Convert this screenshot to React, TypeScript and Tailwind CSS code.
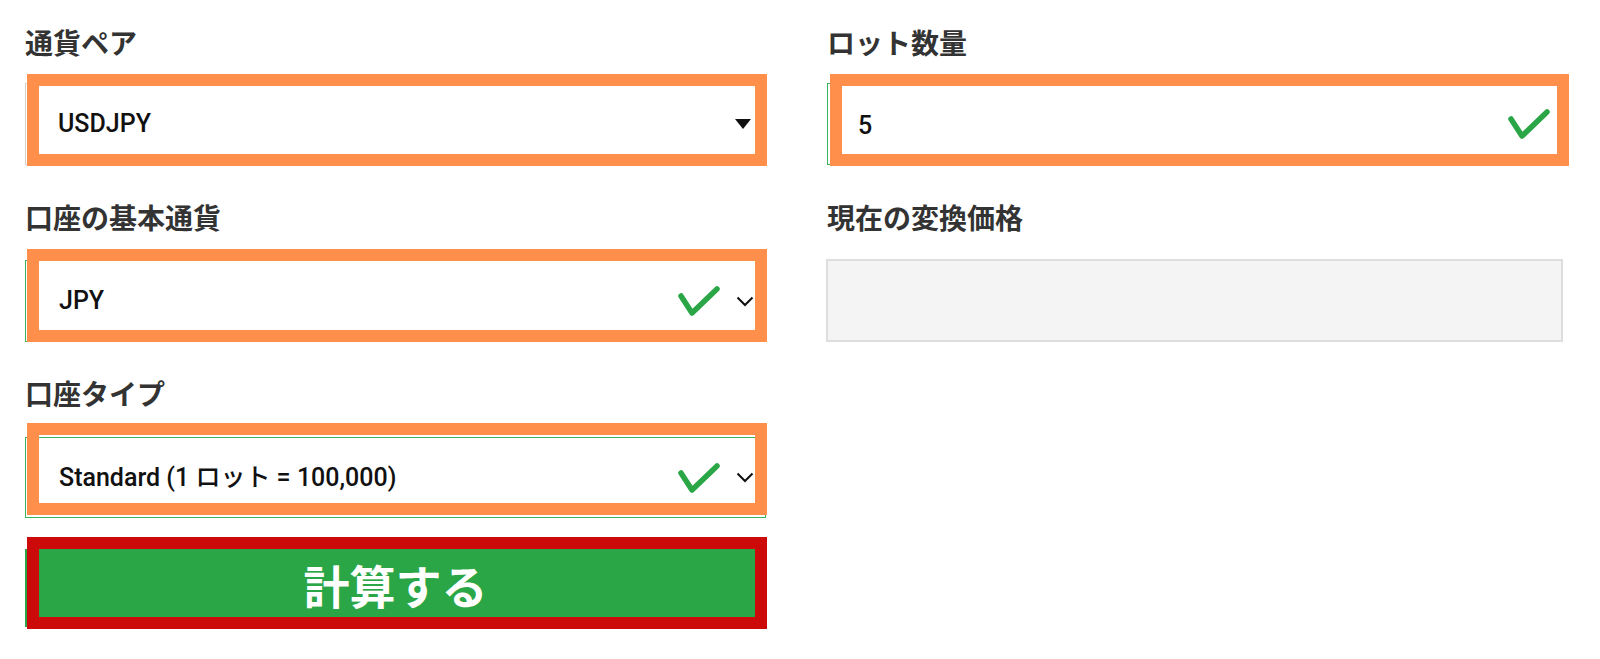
import React from "react";

const labelCls =
  "h-[40px] leading-[40px] text-[28px] font-bold text-[#333] [font-family:'Noto_Sans_CJK_JP',sans-serif]";
const valueCls =
  "text-[25px] font-medium text-[#111] [font-family:Roboto,'Noto_Sans_CJK_JP',sans-serif]";

function Check() {
  return (
    <svg width="42" height="30" viewBox="0 0 42 30" className="shrink-0">
      <polyline
        points="3,10 14,27 39,3"
        fill="none"
        stroke="#2aa646"
        strokeWidth="5.5"
        strokeLinecap="round"
        strokeLinejoin="round"
      />
    </svg>
  );
}

function Chevron() {
  return (
    <svg width="18" height="11" viewBox="0 0 18 11" className="shrink-0">
      <polyline points="1.5,1.5 9,9 16.5,1.5" fill="none" stroke="#111" strokeWidth="2" />
    </svg>
  );
}

function Caret() {
  return (
    <svg width="16" height="10" viewBox="0 0 16 10" className="shrink-0">
      <polygon points="0,0 16,0 8,10" fill="#111" />
    </svg>
  );
}

export default function App() {
  return (
    <div className="w-[1600px] h-[659px] bg-white pl-[25px] pt-[22px] flex gap-[59px]">
      {/* LEFT */}
      <div className="w-[742px] flex flex-col">
        <div className={labelCls}>通貨ペア</div>
        <div className="relative h-[92px] mt-[12px]">
          <div className="mt-[9px] h-[82px] w-[741px] border border-[#d0d0d0] flex items-center pl-[32px] pr-[14px]">
            <span className={`${valueCls} font-bold`}>USDJPY</span>
            <div className="flex-1" />
            <Caret />
          </div>
          <div className="absolute left-[2px] top-0 w-[740px] h-[92px] border-[12px] border-[#ff8f4a]" />
        </div>

        <div className={`${labelCls} mt-[31px]`}>口座の基本通貨</div>
        <div className="relative h-[93px] mt-[12px]">
          <div className="mt-[11px] h-[82px] w-[741px] border border-[#3cb55a] flex items-center pl-[33px] pr-[11px]">
            <span className={`${valueCls} font-bold`}>JPY</span>
            <div className="flex-1" />
            <Check />
            <div className="w-[16px]" />
            <Chevron />
          </div>
          <div className="absolute left-[2px] top-0 w-[740px] h-[93px] border-[12px] border-[#ff8f4a]" />
        </div>

        <div className={`${labelCls} mt-[31px]`}>口座タイプ</div>
        <div className="relative h-[95px] mt-[10px]">
          <div className="mt-[14px] h-[81px] w-[741px] border border-[#3cb55a] flex items-center pl-[33px] pr-[11px]">
            <span className={valueCls}>Standard (1 ロット = 100,000)</span>
            <div className="flex-1" />
            <Check />
            <div className="w-[16px]" />
            <Chevron />
          </div>
          <div className="absolute left-[2px] top-0 w-[740px] h-[92px] border-[12px] border-[#ff8f4a]" />
        </div>

        <div className="relative h-[92px] mt-[19px]">
          <button className="mt-[12px] h-[78px] w-[741px] bg-[#2aa646] flex items-center justify-center pb-[8px] text-white text-[46px] font-bold [font-family:'Noto_Sans_CJK_JP',sans-serif]">
            計算する
          </button>
          <div className="absolute left-[2px] top-0 w-[740px] h-[92px] border-[12px] border-[#cc0a0a]" />
        </div>
      </div>

      {/* RIGHT */}
      <div className="w-[743px] flex flex-col">
        <div className={`${labelCls} pl-[1px]`}>ロット数量</div>
        <div className="relative h-[92px] mt-[12px]">
          <div className="ml-[1px] mt-[9px] h-[82px] w-[742px] border border-[#3cb55a] flex items-center pl-[30px] pr-[18px]">
            <span className={`${valueCls} pt-[4px]`}>5</span>
            <div className="flex-1" />
            <Check />
          </div>
          <div className="absolute left-[4px] top-0 w-[739px] h-[92px] border-[12px] border-[#ff8f4a]" />
        </div>

        <div className={`${labelCls} mt-[31px] pl-[1px]`}>現在の変換価格</div>
        <div className="mt-[22px] h-[83px] w-[737px] bg-[#f4f4f4] border-2 border-[#dedede]" />
      </div>
    </div>
  );
}
